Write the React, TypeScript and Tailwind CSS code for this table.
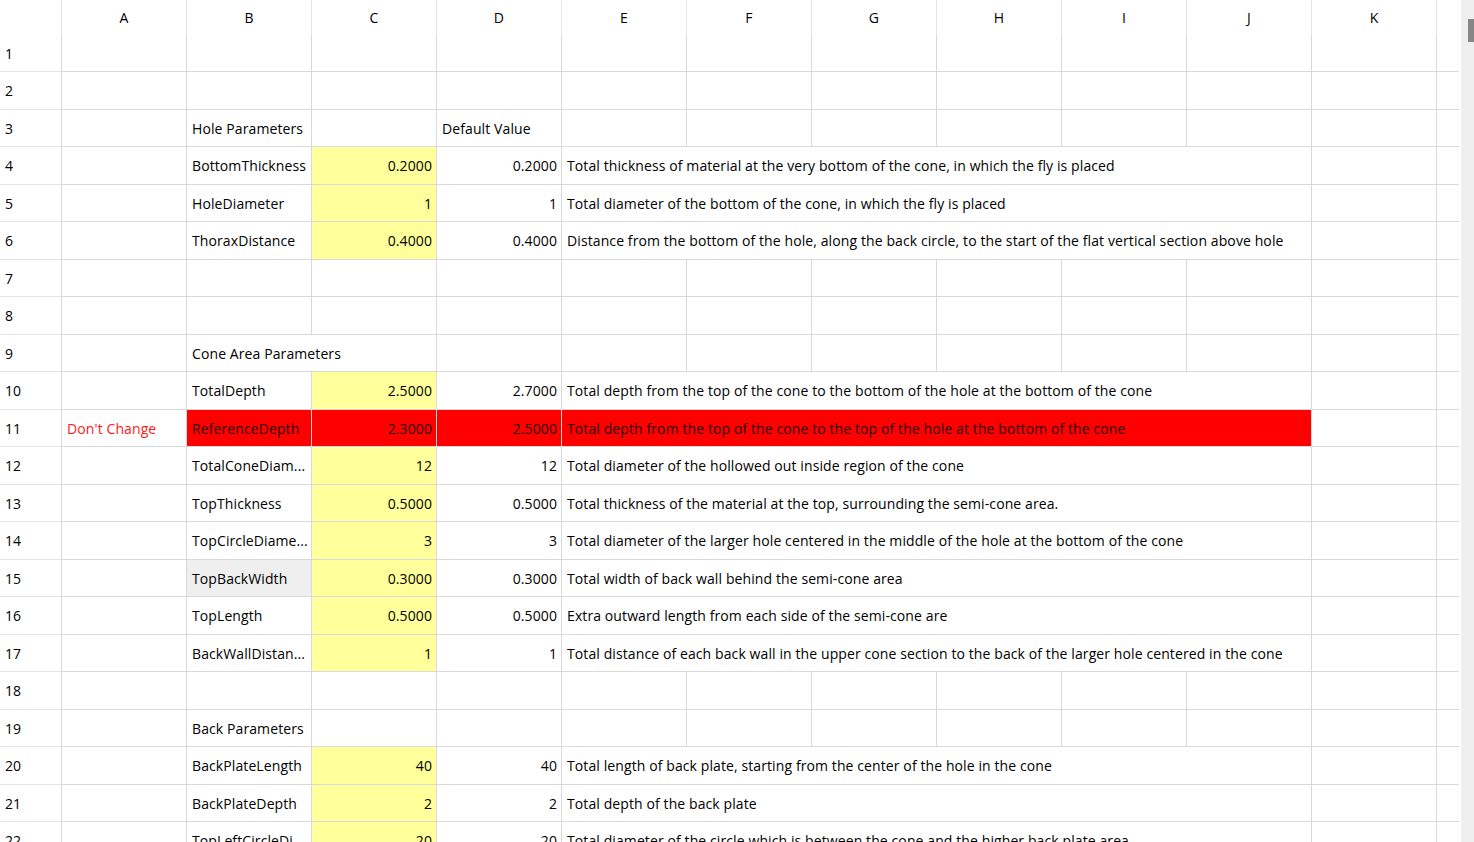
import React from "react";

type Cell = {
  text?: string;
  span?: number;
  right?: boolean;
  bg?: string;
  color?: string;
};

type Row = {
  cells: Cell[];
};

const cols = ["A", "B", "C", "D", "E", "F", "G", "H", "I", "J", "K"];

const blank = (n: number): Cell[] => Array.from({ length: n }, () => ({}));

const param = (
  name: string,
  value: string,
  def: string,
  desc: string,
  nameBg?: string
): Row => ({
  cells: [
    {},
    { text: name, bg: nameBg },
    { text: value, right: true, bg: "bg-[#ffff9c]" },
    { text: def, right: true },
    { text: desc, span: 6 },
    {},
  ],
});

const rows: Row[] = [
  { cells: blank(11) },
  { cells: blank(11) },
  {
    cells: [
      {},
      { text: "Hole Parameters" },
      {},
      { text: "Default Value" },
      ...blank(7),
    ],
  },
  param(
    "BottomThickness",
    "0.2000",
    "0.2000",
    "Total thickness of material at the very bottom of the cone, in which the fly is placed"
  ),
  param(
    "HoleDiameter",
    "1",
    "1",
    "Total diameter of the bottom of the cone, in which the fly is placed"
  ),
  param(
    "ThoraxDistance",
    "0.4000",
    "0.4000",
    "Distance from the bottom of the hole, along the back circle, to the start of the flat vertical section above hole"
  ),
  { cells: blank(11) },
  { cells: blank(11) },
  {
    cells: [{}, { text: "Cone Area Parameters", span: 2 }, ...blank(8)],
  },
  param(
    "TotalDepth",
    "2.5000",
    "2.7000",
    "Total depth from the top of the cone to the bottom of the hole at the bottom of the cone"
  ),
  {
    cells: [
      { text: "Don't Change", color: "text-[#ff1a1a]" },
      { text: "ReferenceDepth", bg: "bg-[#ff0000]", color: "text-[#2a0000]" },
      { text: "2.3000", right: true, bg: "bg-[#ff0000]", color: "text-[#2a0000]" },
      { text: "2.5000", right: true, bg: "bg-[#ff0000]", color: "text-[#2a0000]" },
      {
        text: "Total depth from the top of the cone to the top of the hole at the bottom of the cone",
        span: 6,
        bg: "bg-[#ff0000]",
        color: "text-[#2a0000]",
      },
      {},
    ],
  },
  param(
    "TotalConeDiam...",
    "12",
    "12",
    "Total diameter of the hollowed out inside region of the cone"
  ),
  param(
    "TopThickness",
    "0.5000",
    "0.5000",
    "Total thickness of the material at the top, surrounding the semi-cone area."
  ),
  param(
    "TopCircleDiame...",
    "3",
    "3",
    "Total diameter of the larger hole centered in the middle of the hole at the bottom of the cone"
  ),
  param(
    "TopBackWidth",
    "0.3000",
    "0.3000",
    "Total width of back wall behind the semi-cone area",
    "bg-[#efefef]"
  ),
  param(
    "TopLength",
    "0.5000",
    "0.5000",
    "Extra outward length from each side of the semi-cone are"
  ),
  param(
    "BackWallDistan...",
    "1",
    "1",
    "Total distance of each back wall in the upper cone section to the back of the larger hole centered in the cone"
  ),
  { cells: blank(11) },
  { cells: [{}, { text: "Back Parameters" }, ...blank(9)] },
  param(
    "BackPlateLength",
    "40",
    "40",
    "Total length of back plate, starting from the center of the hole in the cone"
  ),
  param("BackPlateDepth", "2", "2", "Total depth of the back plate"),
  param(
    "TopLeftCircleDi...",
    "20",
    "20",
    "Total diameter of the circle which is between the cone and the higher back plate area"
  ),
];

const widthFor: Record<number, string> = {
  1: "w-[125px]",
  2: "w-[250px]",
  6: "w-[750px]",
};

// row 1 sits under the header, then rows alternate 38 / 37
const rowHeight = (i: number) =>
  i === 0 ? "h-[37px]" : i % 2 === 1 ? "h-[38px]" : "h-[37px]";

function GridCell({ cell }: { cell: Cell }) {
  const span = cell.span ?? 1;
  return (
    <div
      className={`${widthFor[span]} shrink-0 h-full flex items-center pl-[5px] pr-[4px] border-r border-b border-[#d9d9d9] overflow-hidden whitespace-nowrap ${
        cell.right ? "justify-end" : "justify-start"
      } ${cell.bg ?? "bg-white"} ${cell.color ?? "text-black"}`}
    >
      {cell.text}
    </div>
  );
}

export default function App() {
  return (
    <div className="h-[842px] w-[1474px] overflow-hidden bg-white flex font-['Open_Sans',sans-serif] text-[14px] tracking-[0.1px] text-black">
      <div className="w-[1461px] flex flex-col">
        {/* column headers */}
        <div className="flex h-[35px] shrink-0">
          <div className="w-[62px] shrink-0 border-r border-[#e6e6e6]" />
          {cols.map((c) => (
            <div
              key={c}
              className="w-[125px] shrink-0 flex items-center justify-center border-r border-[#e6e6e6]"
            >
              {c}
            </div>
          ))}
        </div>

        {rows.map((row, i) => (
          <div key={i} className={`flex shrink-0 ${rowHeight(i)}`}>
            <div className="w-[62px] shrink-0 h-full flex items-center pl-[5px] border-r border-[#d9d9d9] border-b border-b-[#e6e6e6]">
              {i + 1}
            </div>
            {row.cells.map((cell, j) => (
              <GridCell key={j} cell={cell} />
            ))}
            <div className="w-[22px] shrink-0 h-full border-b border-[#d9d9d9]" />
          </div>
        ))}
      </div>

      {/* vertical scrollbar */}
      <div className="w-[13px] shrink-0 h-full bg-[#efefef] pt-[19px] pl-[7px]">
        <div className="w-[6px] h-[23px] bg-[#868686]" />
      </div>
    </div>
  );
}
